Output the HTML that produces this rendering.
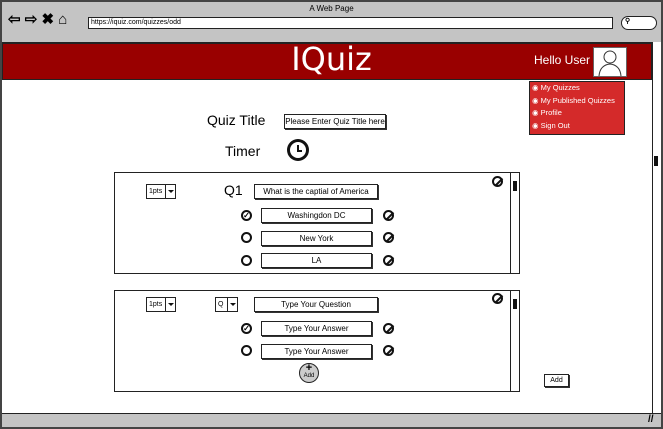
<!DOCTYPE html>
<html><head><style>
*{margin:0;padding:0;box-sizing:border-box}
body{width:663px;height:429px;position:relative;overflow:hidden;background:#fff;font-family:"Liberation Sans",sans-serif;color:#000}
.a{position:absolute}
.in{position:absolute;border:1.5px solid #222;background:#fff;font-size:8px;text-align:center;box-shadow:1px 1px 0 #333}
.circ{position:absolute;width:11px;height:11px;border:2px solid #111;border-radius:50%;background:#fff}
.ban{position:absolute;width:11px;height:11px;border:2px solid #111;border-radius:50%}
.ban:after{content:"";position:absolute;left:3.5px;top:-1px;width:1.8px;height:10px;background:#111;transform:rotate(45deg)}
.dd{position:absolute;border:1.2px solid #222;background:#fff;font-size:7px;height:15px;line-height:13px}
.dd span{position:absolute;right:0;top:0;width:10px;height:100%;border-left:1.2px solid #222}
.dd span:after{content:"";position:absolute;left:2px;top:5px;border:3px solid transparent;border-top:3px solid #111}
.box{position:absolute;left:114px;width:406px;height:102px;border:1.5px solid #222}
.sb{position:absolute;right:0;top:0;width:9px;height:100%;border-left:1px solid #222}
</style></head><body>
<div class="a" style="left:0;top:0;width:663px;height:429px;border:2px solid #444;background:#c4c4c4"></div>
<div class="a" style="left:0;top:4px;width:663px;text-align:center;font-size:8px">A Web Page</div>
<div class="a" style="left:8px;top:11px;font-size:15px;line-height:18px;font-weight:bold;letter-spacing:0px">⇦ ⇨ ✖ ⌂</div>
<div class="a" style="left:88px;top:17px;width:525px;height:12px;border:1.5px solid #222;background:#fff;font-size:7px;line-height:9px;padding-left:2px">https://iquiz.com/quizzes/odd</div>
<div class="a" style="left:621px;top:16px;width:36px;height:14px;border:1.5px solid #222;border-radius:7px;background:#fff;font-size:7px;padding-left:3px;font-weight:bold">⚲</div>
<div class="a" style="left:2px;top:42px;width:650px;height:371px;background:#fff;border-top:2px solid #222"></div>
<div class="a" style="left:2px;top:43px;width:650px;height:37px;background:#990000;border:1px solid #222"></div>
<div class="a" style="left:0;top:40px;width:663px;text-align:center;font-size:32px;color:#fff;font-family:'DejaVu Sans',sans-serif">IQuiz</div>
<div class="a" style="left:534px;top:53px;font-size:12px;color:#fff">Hello User</div>
<div class="a" style="left:593px;top:47px;width:34px;height:30px;background:#fff;border:1px solid #666"><svg width="32" height="28"><circle cx="16" cy="9" r="6" fill="none" stroke="#333"/><path d="M5 28 Q6 17 16 16 Q26 17 27 28" fill="none" stroke="#333"/></svg></div>
<div class="a" style="left:529px;top:81px;width:96px;height:54px;background:#d42a2a;border:1px solid #222;color:#fff;font-size:7.5px;line-height:12.5px;padding:0 0 0 2px">
<div>◉ My Quizzes</div><div>◉ My Published Quizzes</div><div>◉ Profile</div><div>◉ Sign Out</div></div>
<div class="a" style="left:652px;top:42px;width:9px;height:371px;border-left:1px solid #222;background:#fff"></div>
<div class="a" style="left:654px;top:156px;width:4px;height:10px;background:#111"></div>
<div class="a" style="left:2px;top:413px;width:659px;height:14px;background:#c4c4c4;border-top:1.5px solid #222"></div>
<div class="a" style="left:648px;top:414px;font-size:10px;font-weight:bold">//</div>
<div class="a" style="left:207px;top:112px;font-size:14px">Quiz Title</div>
<div class="in" style="left:284px;top:114px;width:102px;height:15px;line-height:13px">Please Enter Quiz Title here</div>
<div class="a" style="left:225px;top:143px;font-size:14px">Timer</div>
<div class="a" style="left:287px;top:139px;width:22px;height:22px;border-radius:50%;background:#111"><div style="position:absolute;left:3px;top:3px;width:16px;height:16px;border-radius:50%;background:#fff"></div><div style="position:absolute;left:10px;top:6px;width:2px;height:6px;background:#111"></div><div style="position:absolute;left:10px;top:11px;width:5px;height:2px;background:#111"></div></div>
<div class="box" style="top:172px"><div class="sb"><div style="position:absolute;left:2px;top:8px;width:4px;height:10px;background:#111"></div></div></div>
<div class="box" style="top:290px"><div class="sb"><div style="position:absolute;left:2px;top:8px;width:4px;height:10px;background:#111"></div></div></div>
<div class="dd" style="left:146px;top:184px;width:30px;padding-left:2px">1pts<span></span></div>
<div class="a" style="left:224px;top:182px;font-size:14px">Q1</div>
<div class="in" style="left:254px;top:184px;width:124px;height:15px;line-height:13px">What is the captial of America</div>
<div class="ban" style="left:492px;top:176px"></div>
<div class="circ" style="left:241px;top:210px;font-size:8px;line-height:7px;text-align:center;font-weight:bold">✓</div>
<div class="circ" style="left:241px;top:232px"></div>
<div class="circ" style="left:241px;top:255px"></div>
<div class="in" style="left:261px;top:208px;width:111px;height:15px;line-height:13px">Washingdon DC</div>
<div class="in" style="left:261px;top:231px;width:111px;height:15px;line-height:13px">New York</div>
<div class="in" style="left:261px;top:253px;width:111px;height:15px;line-height:13px">LA</div>
<div class="ban" style="left:383px;top:210px"></div>
<div class="ban" style="left:383px;top:232px"></div>
<div class="ban" style="left:383px;top:255px"></div>
<div class="dd" style="left:146px;top:297px;width:30px;padding-left:2px">1pts<span></span></div>
<div class="dd" style="left:215px;top:297px;width:23px;padding-left:2px">Q<span></span></div>
<div class="in" style="left:254px;top:297px;width:124px;height:15px;line-height:13px">Type Your Question</div>
<div class="ban" style="left:492px;top:293px"></div>
<div class="circ" style="left:241px;top:323px;font-size:8px;line-height:7px;text-align:center;font-weight:bold">✓</div>
<div class="circ" style="left:241px;top:345px"></div>
<div class="in" style="left:261px;top:321px;width:111px;height:15px;line-height:13px">Type Your Answer</div>
<div class="in" style="left:261px;top:344px;width:111px;height:15px;line-height:13px">Type Your Answer</div>
<div class="ban" style="left:383px;top:323px"></div>
<div class="ban" style="left:383px;top:345px"></div>
<div class="a" style="left:299px;top:363px;width:20px;height:20px;border-radius:50%;background:#ccc;border:1.5px solid #222;text-align:center;font-size:6px;line-height:6px"><b style="font-size:11px;line-height:9px;display:block">+</b>Add</div>
<div class="in" style="left:544px;top:374px;width:25px;height:13px;line-height:11px;font-size:7px">Add</div>
</body></html>
